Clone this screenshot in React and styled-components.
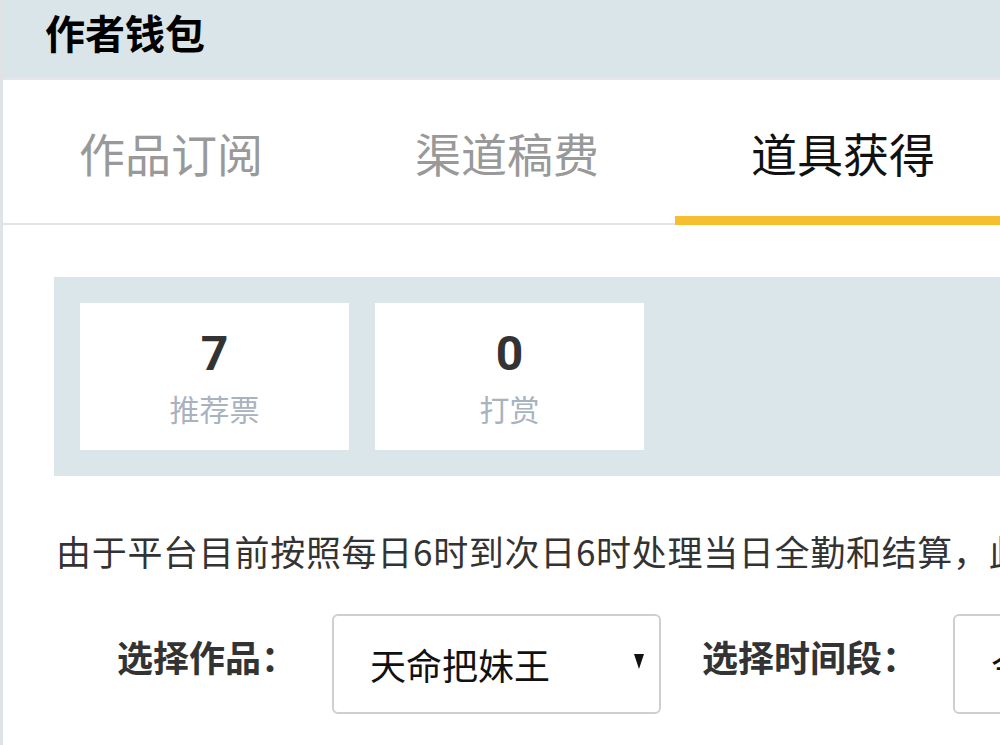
import React, { useState } from 'react'
import styled, { createGlobalStyle } from 'styled-components'

const GlobalStyle = createGlobalStyle`
    html, body {
        margin: 0;
        padding: 0;
        background: #fff;
    }
    body {
        font-family: "Noto Sans CJK SC", "Noto Sans", sans-serif;
        overflow: hidden;
    }
`

const Page = styled.div`
    width: 1000px;
    height: 745px;
    overflow: hidden;
    border-left: 3px solid #e0e3e5;
    box-sizing: border-box;
`

const Inner = styled.div`
    width: 1400px;
`

const Header = styled.header`
    height: 80px;
    box-sizing: border-box;
    padding: 0 0 14px 42px;
    display: flex;
    align-items: center;
    background: #dae5ea;
    border-bottom: 2px solid #e3e6e8;
    font-size: 40px;
    font-weight: 700;
    color: #000;
`

const Tabs = styled.nav`
    display: flex;
    height: 143px;
    border-bottom: 2px solid #e4e4e4;
`

const Tab = styled.div`
    position: relative;
    width: 336px;
    display: flex;
    align-items: center;
    justify-content: center;
    font-size: 46px;
    color: ${p => (p.$active ? '#111' : '#999')};
    cursor: pointer;

    &::after {
        content: '';
        display: ${p => (p.$active ? 'block' : 'none')};
        position: absolute;
        left: 0;
        right: 0;
        bottom: -2px;
        height: 9px;
        background: #f6bf30;
    }
`

const Content = styled.section`
    padding: 52px 0 0 51px;
`

const StatsPanel = styled.div`
    display: flex;
    gap: 26px;
    padding: 26px;
    background: #dbe6ea;
`

const StatCard = styled.div`
    width: 269px;
    height: 147px;
    background: #fff;
    display: flex;
    flex-direction: column;
    align-items: center;
    padding-top: 22px;
    box-sizing: border-box;
`

const StatValue = styled.div`
    font-family: Roboto, "Noto Sans CJK SC", sans-serif;
    font-size: 48px;
    font-weight: 700;
    line-height: 58px;
    color: #333;
`

const StatLabel = styled.div`
    font-size: 30px;
    line-height: 42px;
    margin-top: 4px;
    color: #a9b2bf;
`

const Notice = styled.p`
    margin: 50px 0 0 2px;
    font-size: 35px;
    letter-spacing: 0.7px;
    line-height: 50px;
    color: #333;
    white-space: nowrap;
`

const FilterRow = styled.div`
    display: flex;
    align-items: center;
    margin-top: 38px;
    padding-left: 63px;
`

const FilterLabel = styled.label`
    font-size: 36px;
    font-weight: 700;
    color: #333;
    padding-bottom: 16px;
    margin-right: 35px;
    white-space: nowrap;
`

const SelectBox = styled.div`
    width: ${p => p.$width}px;
    height: 100px;
    box-sizing: border-box;
    border: 2px solid #cfcfcf;
    border-radius: 6px;
    display: flex;
    align-items: center;
    justify-content: space-between;
    padding: 0 15px 0 36px;
    margin-right: 41px;
    font-size: 36px;
    color: #111;
    background: #fff;
`

/* narrow down-pointing caret of the native select */
const Caret = styled.span`
    width: 0;
    height: 0;
    border-left: 5px solid transparent;
    border-right: 5px solid transparent;
    border-top: 15px solid #111;
    margin-bottom: 6px;
`

const tabs = ['作品订阅', '渠道稿费', '道具获得']

const stats = [
    { value: 7, label: '推荐票' },
    { value: 0, label: '打赏' },
]

export default function App() {
    const [active, setActive] = useState(2)

    return (
        <>
            <GlobalStyle />
            <Page>
                <Inner>
                    <Header>作者钱包</Header>
                    <Tabs>
                        {tabs.map((t, i) => (
                            <Tab key={t} $active={i === active} onClick={() => setActive(i)}>
                                {t}
                            </Tab>
                        ))}
                    </Tabs>
                    <Content>
                        <StatsPanel>
                            {stats.map(s => (
                                <StatCard key={s.label}>
                                    <StatValue>{s.value}</StatValue>
                                    <StatLabel>{s.label}</StatLabel>
                                </StatCard>
                            ))}
                        </StatsPanel>
                        <Notice>
                            由于平台目前按照每日6时到次日6时处理当日全勤和结算，此期间的数据可能会有延迟，请以次日数据为准。
                        </Notice>
                        <FilterRow>
                            <FilterLabel>选择作品：</FilterLabel>
                            <SelectBox $width={329}>
                                <span>天命把妹王</span>
                                <Caret />
                            </SelectBox>
                            <FilterLabel>选择时间段：</FilterLabel>
                            <SelectBox $width={329}>
                                <span>今日</span>
                                <Caret />
                            </SelectBox>
                        </FilterRow>
                    </Content>
                </Inner>
            </Page>
        </>
    )
}
